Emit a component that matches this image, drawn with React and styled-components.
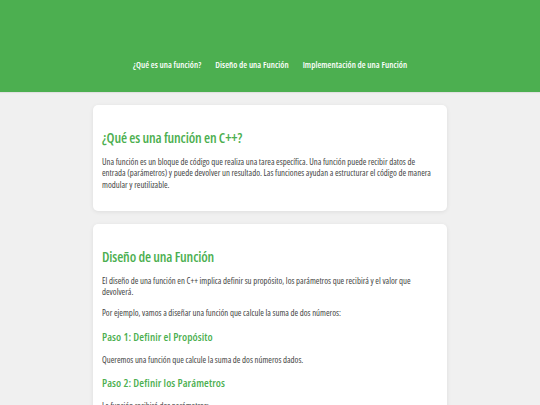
import React from "react";
import styled, { createGlobalStyle } from "styled-components";

const Global = createGlobalStyle`
  html, body { margin: 0; padding: 0; }
  body {
    background: #f0f0f0;
    font-family: "Open Sans", "Liberation Sans", Arial, sans-serif;
    font-stretch: 75%;
    color: #333;
  }
`;

const Header = styled.header`
  background: #4caf50;
  height: 92px;
  box-sizing: border-box;
  padding-top: 57px;
  box-shadow: 0 1px 1px rgba(0, 0, 0, 0.06);
`;

const Nav = styled.nav`
  display: flex;
  justify-content: center;
  gap: 14px;
`;

const NavLink = styled.a`
  color: #fff;
  font-weight: 600;
  font-size: 8.8px;
  line-height: 16px;
  letter-spacing: 0.05px;
  text-decoration: none;
`;

const Main = styled.main`
  display: flex;
  flex-direction: column;
  align-items: center;
  gap: 13px;
  padding-top: 13px;
`;

const Card = styled.section`
  width: 354px;
  box-sizing: border-box;
  background: #fff;
  border-radius: 5px;
  box-shadow: 0 1px 4px rgba(0, 0, 0, 0.08);
  padding: 10px 9px;
`;

const H2 = styled.h2`
  color: #4caf50;
  font-size: 14px;
  line-height: 16px;
  font-weight: 600;
  letter-spacing: -0.15px;
  margin: 15px 0 11px;
`;

const H3 = styled.h3`
  color: #4caf50;
  font-size: 11px;
  line-height: 13px;
  font-weight: 600;
  letter-spacing: 0.1px;
  margin: 10px 0 12px;
`;

const P = styled.p`
  font-size: 8.75px;
  color: #444;
  line-height: 11.3px;
  margin: 9px 0 10px;
`;

export default function App() {
  return (
    <>
      <Global />
      <Header>
        <Nav>
          <NavLink href="#que">¿Qué es una función?</NavLink>
          <NavLink href="#diseno">Diseño de una Función</NavLink>
          <NavLink href="#impl">Implementación de una Función</NavLink>
        </Nav>
      </Header>
      <Main>
        <Card id="que">
          <H2>¿Qué es una función en C++?</H2>
          <P>
            Una función es un bloque de código que realiza una tarea específica. Una función puede recibir datos de
            entrada (parámetros) y puede devolver un resultado. Las funciones ayudan a estructurar el código de manera
            modular y reutilizable.
          </P>
        </Card>
        <Card id="diseno">
          <H2>Diseño de una Función</H2>
          <P>
            El diseño de una función en C++ implica definir su propósito, los parámetros que recibirá y el valor que
            devolverá.
          </P>
          <P>Por ejemplo, vamos a diseñar una función que calcule la suma de dos números:</P>
          <H3>Paso 1: Definir el Propósito</H3>
          <P>Queremos una función que calcule la suma de dos números dados.</P>
          <H3>Paso 2: Definir los Parámetros</H3>
          <P>La función recibirá dos parámetros:</P>
        </Card>
      </Main>
    </>
  );
}
